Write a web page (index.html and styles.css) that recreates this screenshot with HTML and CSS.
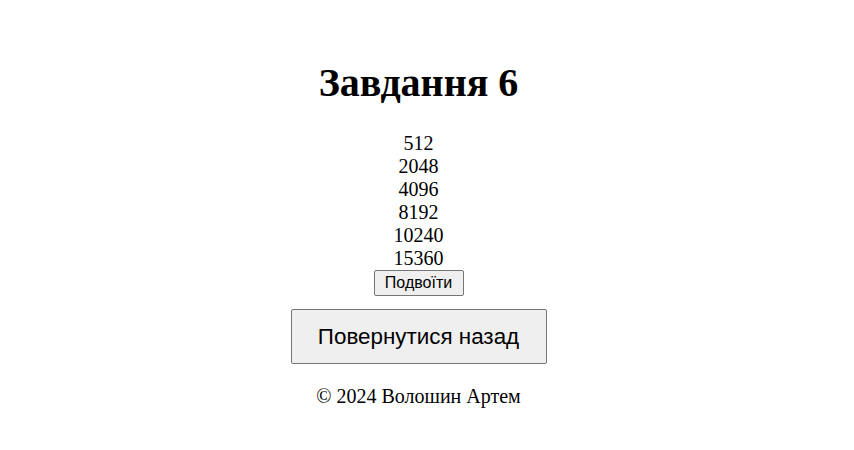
FILE: index.html
```html
<!DOCTYPE html>
<html lang="uk">
<head>
<meta charset="utf-8">
<title>Завдання 6</title>
<link rel="stylesheet" href="styles.css">
</head>
<body>
<main class="page">
  <h1 class="title">Завдання 6</h1>
  <div class="numbers">
    <div>512</div>
    <div>2048</div>
    <div>4096</div>
    <div>8192</div>
    <div>10240</div>
    <div>15360</div>
  </div>
  <button class="btn-small">Подвоїти</button>
  <button class="btn-back">Повернутися назад</button>
  <footer class="footer">© 2024 Волошин Артем</footer>
</main>
</body>
</html>
```
FILE: styles.css
```css
html, body {
  margin: 0;
  padding: 0;
  background: #fff;
}
.page {
  display: flex;
  flex-direction: column;
  align-items: center;
  font-family: "Liberation Serif", "Times New Roman", serif;
  color: #000;
  padding-top: 60px;
  padding-right: 17px;
}
.title {
  margin: 0 0 26px;
  font-size: 40px;
  font-weight: bold;
  line-height: 46px;
}
.numbers {
  font-size: 20px;
  line-height: 23px;
  text-align: center;
}
.btn-small {
  font-family: "Liberation Sans", Arial, sans-serif;
  font-size: 16px;
  height: 26px;
  width: 90px;
  padding: 0;
  margin: 0;
  background: #efefef;
  border: 1px solid #767676;
  border-radius: 2px;
  color: #000;
}
.btn-back {
  font-family: "Liberation Sans", Arial, sans-serif;
  font-size: 22.4px;
  width: 256px;
  height: 55px;
  margin-top: 13px;
  background: #efefef;
  border: 1px solid #767676;
  border-radius: 2px;
  color: #000;
}
.footer {
  margin-top: 21px;
  font-size: 20px;
  line-height: 23px;
}
```
